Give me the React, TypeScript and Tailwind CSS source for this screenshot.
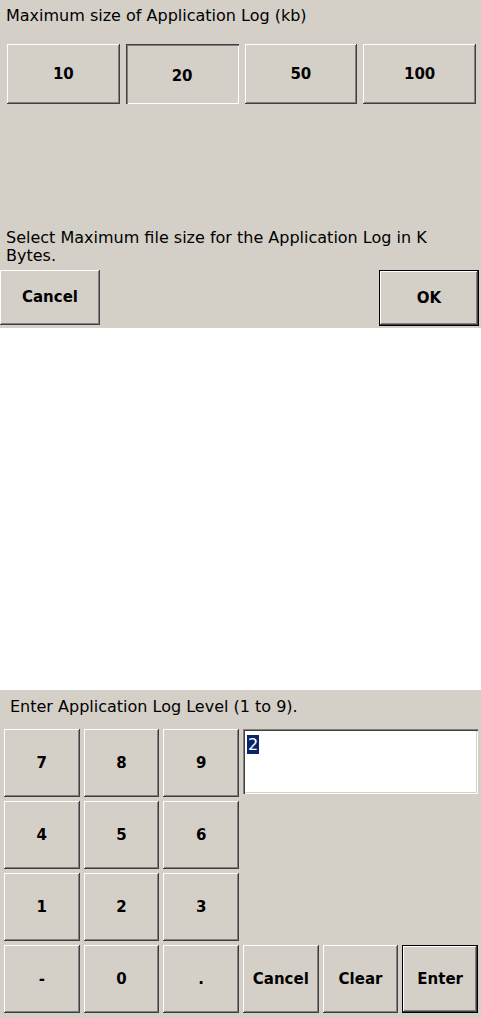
const font = { fontFamily: '"DejaVu Sans", Tahoma, sans-serif' }

const raised =
  'bg-[#d4d0c8] shadow-[inset_-1px_-1px_0_#404040,inset_1px_1px_0_#ffffff,inset_-2px_-2px_0_#808080]'
const sunken =
  'bg-[#d4d0c8] shadow-[inset_1px_1px_0_#404040,inset_2px_2px_0_#808080,inset_-1px_-1px_0_#ffffff]'
const defaultBtn =
  'bg-[#d4d0c8] border border-black shadow-[inset_-1px_-1px_0_#404040,inset_1px_1px_0_#ffffff,inset_-2px_-2px_0_#808080]'

function Btn({
  label,
  kind = 'raised',
  className = '',
}: {
  label: string
  kind?: 'raised' | 'pressed' | 'default'
  className?: string
}) {
  const look = kind === 'pressed' ? sunken : kind === 'default' ? defaultBtn : raised
  return (
    <button
      className={`flex items-center justify-center text-[15px] font-bold text-black ${look} ${className}`}
      style={font}
    >
      <span className={kind === 'pressed' ? 'translate-y-[2px]' : ''}>{label}</span>
    </button>
  )
}

export default function App() {
  const sizes = ['10', '20', '50', '100']
  const keys = ['7', '8', '9', '4', '5', '6', '1', '2', '3']

  return (
    <div className="w-[481px] h-[1018px] bg-white text-black" style={font}>
      {/* log size panel */}
      <div className="h-[328px] bg-[#d4d0c8] flex flex-col">
        <div className="pl-[6px] pt-[7px] text-[16px] leading-[18px]">
          Maximum size of Application Log (kb)
        </div>
        <div className="mt-[19px] flex gap-[6px] pl-[7px] pr-[5px]">
          {sizes.map((s) => (
            <Btn key={s} label={s} kind={s === '20' ? 'pressed' : 'raised'} className="h-[60px] flex-1" />
          ))}
        </div>
        <div className="mt-[125px] pl-[6px] pr-[20px] text-[16px] leading-[18px]">
          Select Maximum file size for the Application Log in K Bytes.
        </div>
        <div className="mt-[5px] flex justify-between pr-[2px]">
          <Btn label="Cancel" className="h-[55px] w-[100px]" />
          <Btn label="OK" kind="default" className="h-[56px] w-[100px]" />
        </div>
      </div>

      <div className="h-[362px]" />

      {/* log level panel */}
      <div className="h-[328px] bg-[#d4d0c8] flex flex-col">
        <div className="pl-[10px] pt-[8px] text-[16px] leading-[18px]">
          Enter Application Log Level (1 to 9).
        </div>
        <div className="mt-[13px] grid grid-cols-6 grid-rows-[68px_68px_68px_68px] gap-x-[4px] gap-y-[4px] pl-[4px] pr-[3px]">
          {keys.slice(0, 3).map((k) => (
            <Btn key={k} label={k} />
          ))}
          <div className="col-span-3 h-[65px] bg-white pl-[4px] pt-[4px] shadow-[inset_1px_1px_0_#808080,inset_2px_2px_0_#404040,inset_-1px_-1px_0_#ffffff,inset_-2px_-2px_0_#d4d0c8]">
            <span className="bg-[#0a246a] text-white text-[16px] leading-[18px] px-[1px]">2</span>
          </div>
          {keys.slice(3, 6).map((k) => (
            <Btn key={k} label={k} />
          ))}
          <div className="col-span-3" />
          {keys.slice(6, 9).map((k) => (
            <Btn key={k} label={k} />
          ))}
          <div className="col-span-3" />
          <Btn label="-" />
          <Btn label="0" />
          <Btn label="." />
          <Btn label="Cancel" />
          <Btn label="Clear" />
          <Btn label="Enter" kind="default" />
        </div>
      </div>
    </div>
  )
}
